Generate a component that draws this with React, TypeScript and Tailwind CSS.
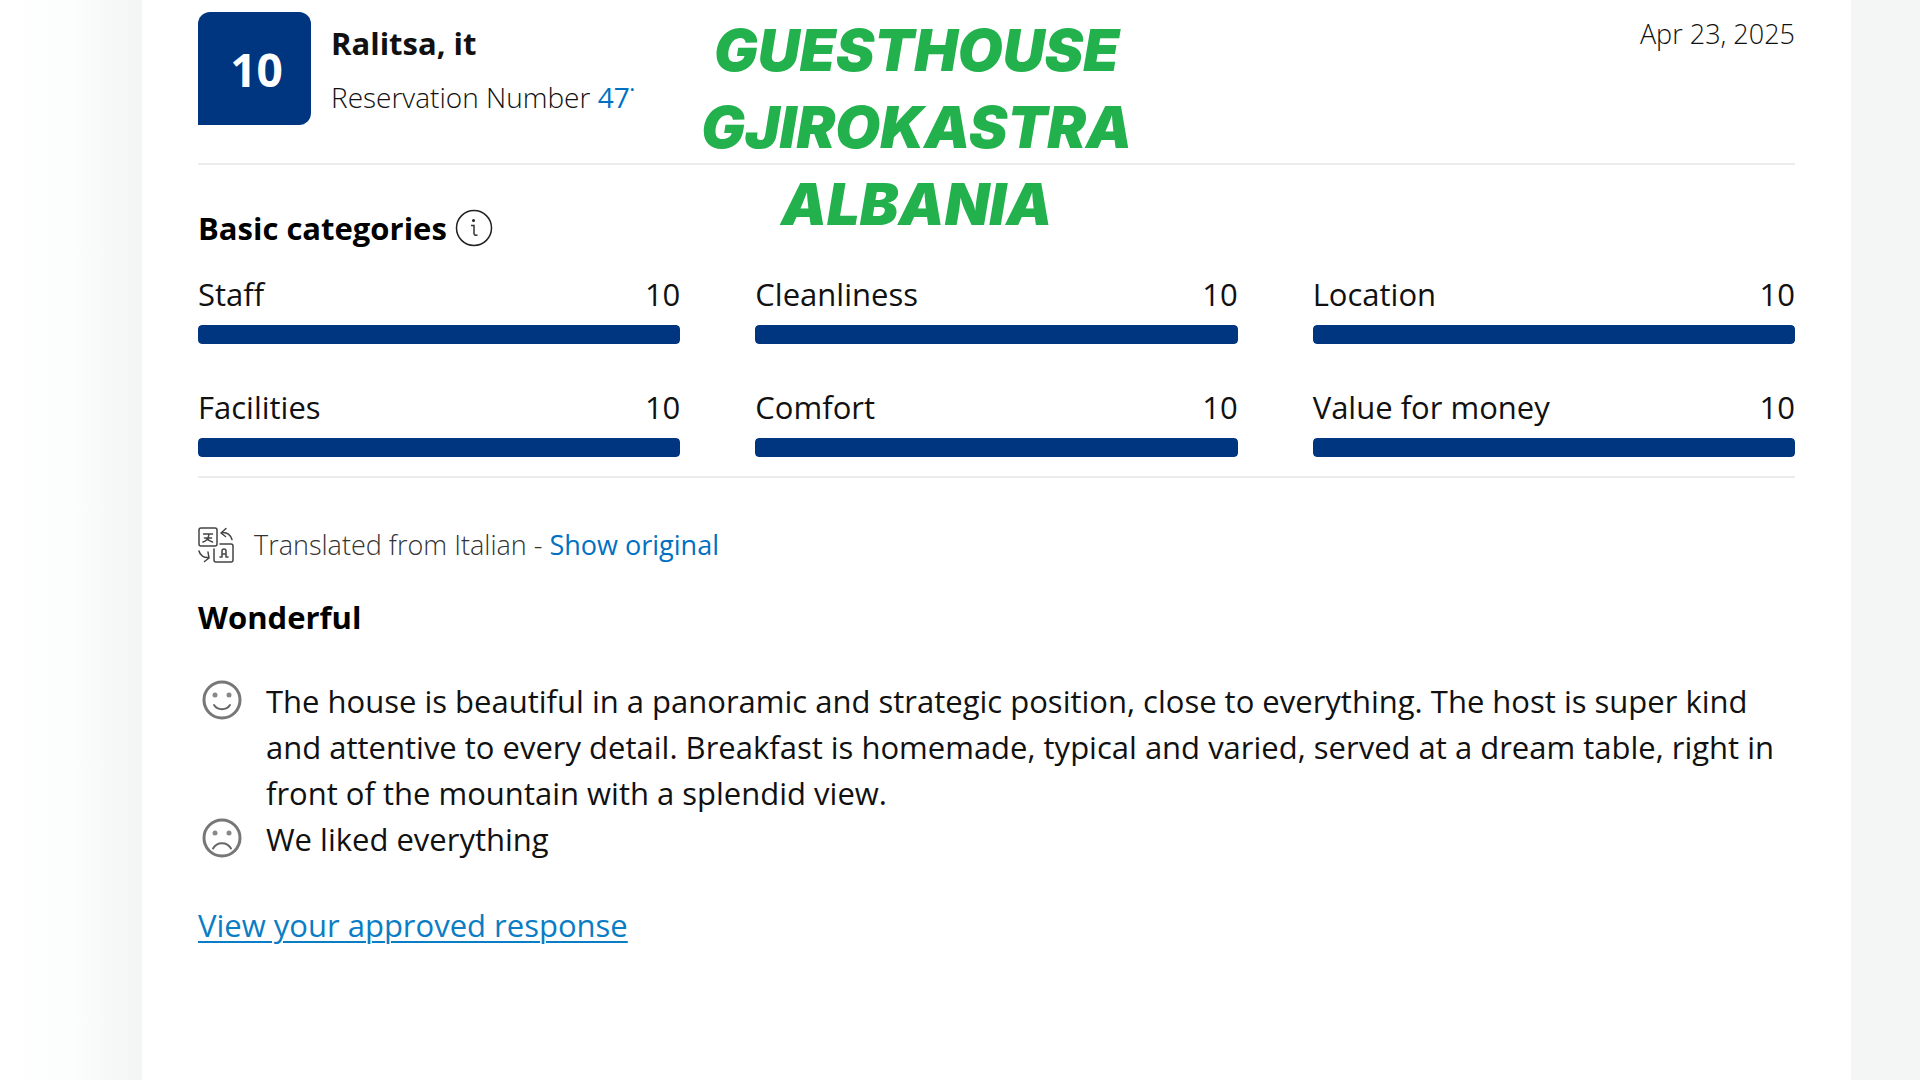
import type { ReactNode } from "react";

const categories = [
  { id: "staff", name: "Staff", score: 10 },
  { id: "cleanliness", name: "Cleanliness", score: 10 },
  { id: "location", name: "Location", score: 10 },
  { id: "facilities", name: "Facilities", score: 10 },
  { id: "comfort", name: "Comfort", score: 10 },
  { id: "value", name: "Value for money", score: 10 },
];

function ScoreBadge({ score }: Readonly<{ score: number }>) {
  return (
    <div className="flex size-[113px] shrink-0 items-center justify-center rounded-xl rounded-bl-none bg-[#003580] pl-1 text-[46px] font-bold text-white">
      {score}
    </div>
  );
}

function CategoryScore({
  name,
  score,
}: Readonly<{
  name: string;
  score: number;
}>) {
  return (
    <li>
      <div className="flex justify-between">
        <span>{name}</span>
        <span>{score}</span>
      </div>
      <div className="mt-2 h-[19px] overflow-hidden rounded bg-white">
        <div
          className="h-full rounded bg-[#003580]"
          style={{ width: `${score * 10}%` }}
        />
      </div>
    </li>
  );
}

function Comment({
  icon,
  children,
}: Readonly<{
  icon: ReactNode;
  children: ReactNode;
}>) {
  return (
    <div className="flex gap-6">
      <span className="ml-1 flex h-11 shrink-0 items-center">{icon}</span>
      <p>{children}</p>
    </div>
  );
}

export default function App() {
  return (
    <div className="flex min-h-screen bg-[#f4f5f5] font-['Open_Sans','Noto_Sans',sans-serif] text-[31px] leading-[46px] text-[#111]">
      <div className="w-[142px] shrink-0 bg-linear-to-r from-white via-[#fcfdfd] to-[#f3f4f4]" />
      <main className="min-w-0 flex-1 bg-white px-14 pt-3">
        <header className="relative flex items-start border-b-2 border-[#ebebeb] pb-[38px]">
          <ScoreBadge score={10} />
          <div className="ml-5 flex flex-col gap-2 pt-2">
            <h1 className="font-bold">Ralitsa, it</h1>
            <p className="text-[28px] font-light text-[#111]">
              Reservation Number{" "}
              <a href="#reservation" className="font-normal text-[#0071c2]">
                47˙
              </a>
            </p>
          </div>
          <time
            dateTime="2025-04-23"
            className="ml-auto text-[27px] leading-[44px] font-light text-[#111]"
          >
            Apr 23, 2025
          </time>
          <p className="absolute top-0 left-[45%] -translate-x-1/2 text-center font-['Inter','Liberation_Sans',sans-serif] text-[58px] leading-[77px] font-black text-[#22b14c] italic [font-optical-sizing:none]">
            GUESTHOUSE
            <br />
            GJIROKASTRA
            <br />
            ALBANIA
          </p>
        </header>

        <section className="border-b-2 border-[#ebebeb] pt-10 pb-[19px]">
          <div className="flex items-center gap-2">
            <h2 className="font-bold text-black">Basic categories</h2>
            <button type="button" aria-label="About basic categories">
              <InfoIcon />
            </button>
          </div>
          <ul className="mt-5 grid grid-cols-3 gap-x-[75px] gap-y-10">
            {categories.map((category) => (
              <CategoryScore
                key={category.id}
                name={category.name}
                score={category.score}
              />
            ))}
          </ul>
        </section>

        <section className="pt-11 pb-12">
          <div className="flex items-center gap-5 text-[27px] font-light text-[#333]">
            <TranslateIcon />
            <p>
              Translated from Italian -{" "}
              <a href="#original" className="font-normal text-[#0071c2]">
                Show original
              </a>
            </p>
          </div>
          <h2 className="mt-[26px] font-bold text-black">Wonderful</h2>
          <div className="mt-[38px]">
            <Comment icon={<FaceIcon mouth="M12 25c3.500 5.500 12.500 5.500 16 0" />}>
              The house is beautiful in a panoramic and strategic position,
              close to everything. The host is super kind and attentive to every
              detail. Breakfast is homemade, typical and varied, served at a
              dream table, right in front of the mountain with a splendid view.
            </Comment>
            <Comment icon={<FaceIcon mouth="M11 30.500c4-7 14-7 18 0" />}>
              We liked everything
            </Comment>
          </div>
          <a
            href="#response"
            className="mt-10 inline-block text-[#0a7dc4] underline decoration-2 underline-offset-4"
          >
            View your approved response
          </a>
        </section>
      </main>
      <div className="w-[69px] shrink-0" />
    </div>
  );
}

function InfoIcon() {
  return (
    <svg viewBox="0 0 38 38" fill="none" aria-hidden="true" className="size-[38px]">
      <circle cx="19" cy="19" r="17.500" stroke="#222" strokeWidth="1.500" />
      <circle cx="18.500" cy="11.500" r="1.500" fill="#222" />
      <path
        d="M16 16.500h3v8c0 1.500 1.200 2 3.500 1.500"
        stroke="#333"
        strokeWidth="1.500"
      />
    </svg>
  );
}

function TranslateIcon() {
  return (
    <svg
      viewBox="0 0 36 36"
      fill="none"
      stroke="#444"
      strokeWidth="1.500"
      strokeLinecap="round"
      strokeLinejoin="round"
      aria-hidden="true"
      className="size-9 shrink-0"
    >
      <rect x="1" y="1" width="18" height="18" rx="2" />
      <path d="M5.500 7h9M11 7c-.5 4-2.500 7-6 8M6.500 11h7M9 11.500c1.500 2 3 3 5.500 3.500" />
      <path d="M22 17h11a2 2 0 0 1 2 2v14a2 2 0 0 1-2 2H18a2 2 0 0 1-2-2V22" />
      <path d="M22 30h2v-6a2 2 0 0 1 4 0v6h2M24 27h4" />
      <path d="M28 1.500l-5 4.500 4.500 3.500M23.500 5.500c5-.5 9 2 10.500 7" />
      <path d="M6.500 34.500l4.500-3.500-1-6M10.500 30.500C6 31 2 28.500 1 24" />
    </svg>
  );
}

function FaceIcon({ mouth }: Readonly<{ mouth: string }>) {
  return (
    <svg viewBox="0 0 40 40" fill="none" aria-hidden="true" className="size-10">
      <circle cx="20" cy="20" r="18" stroke="#777" strokeWidth="3" />
      <circle cx="13" cy="15" r="2.500" fill="#888" />
      <circle cx="27" cy="15" r="2.500" fill="#888" />
      <path d={mouth} stroke="#666" strokeWidth="2" strokeLinecap="round" />
    </svg>
  );
}
